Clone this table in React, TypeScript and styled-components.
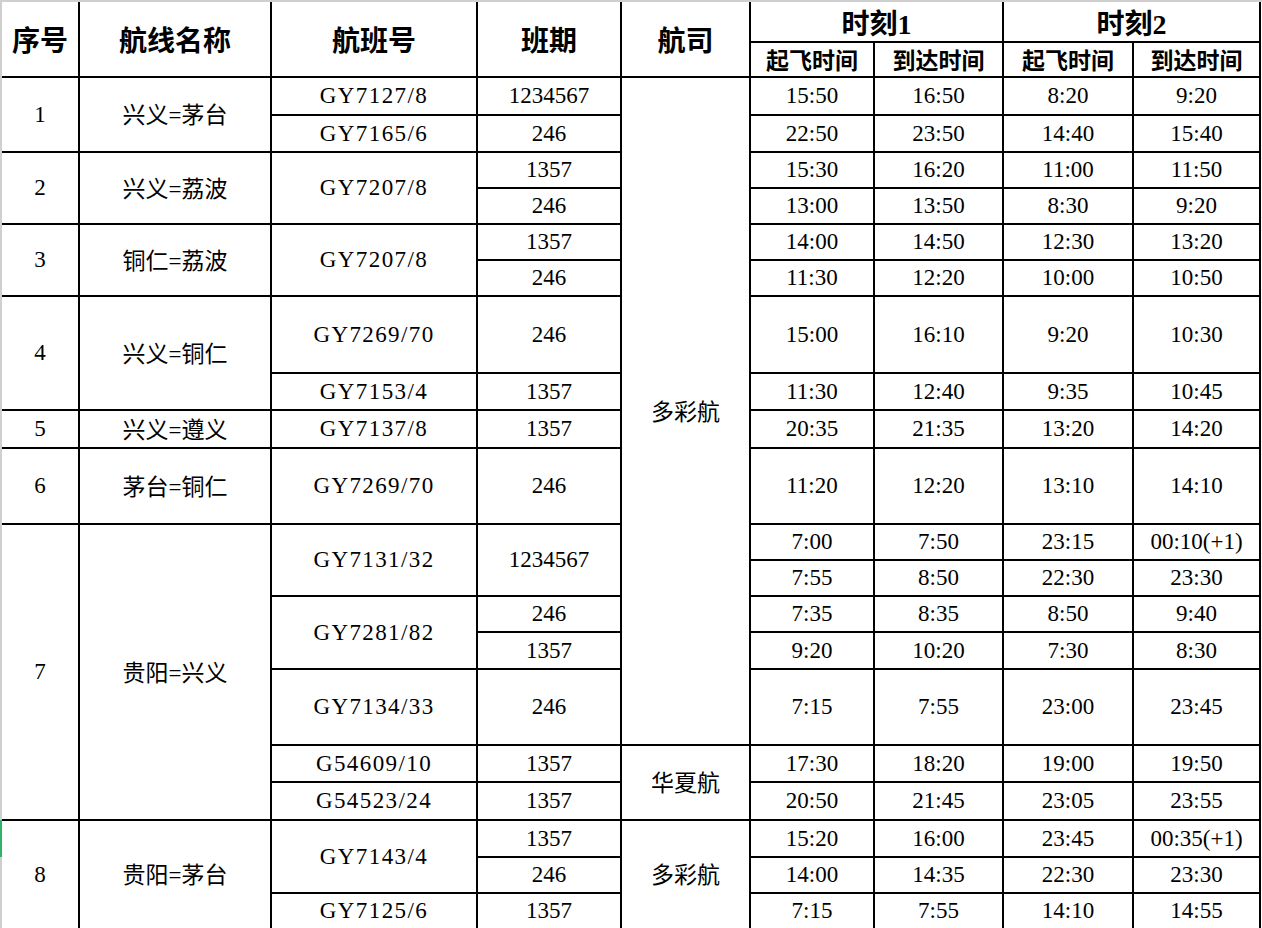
import React from "react";
import styled, { createGlobalStyle } from "styled-components";

const GlobalStyle = createGlobalStyle`
  html, body {
    margin: 0;
    padding: 0;
    background: #ffffff;
  }
  body {
    font-family: "Liberation Serif", "Noto Sans CJK SC", serif;
    color: #000000;
    overflow: hidden;
  }
`;

const Sheet = styled.div`
  display: flex;
  flex-direction: row;
  min-height: 928px;
`;

// sheet edge on the left, with the selected-row marker in green
const Gutter = styled.div`
  flex: 0 0 2px;
  background: linear-gradient(
    to bottom,
    #cfcfcf 0,
    #cfcfcf 820px,
    #31b26a 820px,
    #31b26a 857px,
    #cfcfcf 857px
  );
`;

const Main = styled.div`
  flex: 1;
  border-top: 2px solid #cfcfcf;
`;

const Table = styled.table`
  border-collapse: separate;
  border-spacing: 0;
  table-layout: fixed;
  width: 1259px;
`;

const Row = styled.tr<{ $h: number }>`
  height: ${(p) => p.$h}px;
`;

const Cell = styled.td`
  border-right: 2px solid #000;
  border-bottom: 2px solid #000;
  padding: 0;
  text-align: center;
  vertical-align: middle;
  white-space: nowrap;
  font-size: 23px;
  line-height: 1.2;
`;

// CJK glyphs sit a little high next to the serif digits
const Cn = styled(Cell)`
  padding-top: 3px;
`;

const Head = styled(Cell).attrs({ as: "th" })`
  font-size: 28px;
  font-weight: 700;
  line-height: 30px;
  padding-top: 6px;
`;

const SubHead = styled(Cell).attrs({ as: "th" })`
  font-size: 23px;
  font-weight: 700;
  line-height: 27px;
  padding-top: 4px;
`;

const Flight = styled(Cell)`
  letter-spacing: 1.4px;
`;

const widths = [78, 192, 206, 144, 129, 124, 129, 130, 127];

function Times({ t }: { t: string[] }) {
  return (
    <>
      {t.map((v, i) => (
        <Cell key={i}>{v}</Cell>
      ))}
    </>
  );
}

export default function App() {
  return (
    <React.Fragment>
      <GlobalStyle />
      <Sheet>
        <Gutter />
        <Main>
          <Table>
            <colgroup>
              {widths.map((w, i) => (
                <col key={i} width={w} />
              ))}
            </colgroup>
            <thead>
              <Row $h={41}>
                <Head rowSpan={2}>序号</Head>
                <Head rowSpan={2}>航线名称</Head>
                <Head rowSpan={2}>航班号</Head>
                <Head rowSpan={2}>班期</Head>
                <Head rowSpan={2}>航司</Head>
                <Head colSpan={2}>时刻1</Head>
                <Head colSpan={2}>时刻2</Head>
              </Row>
              <Row $h={35}>
                <SubHead>起飞时间</SubHead>
                <SubHead>到达时间</SubHead>
                <SubHead>起飞时间</SubHead>
                <SubHead>到达时间</SubHead>
              </Row>
            </thead>
            <tbody>
              <Row $h={38}>
                <Cell rowSpan={2}>1</Cell>
                <Cn rowSpan={2}>兴义=茅台</Cn>
                <Flight>GY7127/8</Flight>
                <Cell>1234567</Cell>
                <Cn rowSpan={15}>多彩航</Cn>
                <Times t={["15:50", "16:50", "8:20", "9:20"]} />
              </Row>
              <Row $h={37}>
                <Flight>GY7165/6</Flight>
                <Cell>246</Cell>
                <Times t={["22:50", "23:50", "14:40", "15:40"]} />
              </Row>

              <Row $h={36}>
                <Cell rowSpan={2}>2</Cell>
                <Cn rowSpan={2}>兴义=荔波</Cn>
                <Flight rowSpan={2}>GY7207/8</Flight>
                <Cell>1357</Cell>
                <Times t={["15:30", "16:20", "11:00", "11:50"]} />
              </Row>
              <Row $h={36}>
                <Cell>246</Cell>
                <Times t={["13:00", "13:50", "8:30", "9:20"]} />
              </Row>

              <Row $h={36}>
                <Cell rowSpan={2}>3</Cell>
                <Cn rowSpan={2}>铜仁=荔波</Cn>
                <Flight rowSpan={2}>GY7207/8</Flight>
                <Cell>1357</Cell>
                <Times t={["14:00", "14:50", "12:30", "13:20"]} />
              </Row>
              <Row $h={36}>
                <Cell>246</Cell>
                <Times t={["11:30", "12:20", "10:00", "10:50"]} />
              </Row>

              <Row $h={77}>
                <Cell rowSpan={2}>4</Cell>
                <Cn rowSpan={2}>兴义=铜仁</Cn>
                <Flight>GY7269/70</Flight>
                <Cell>246</Cell>
                <Times t={["15:00", "16:10", "9:20", "10:30"]} />
              </Row>
              <Row $h={37}>
                <Flight>GY7153/4</Flight>
                <Cell>1357</Cell>
                <Times t={["11:30", "12:40", "9:35", "10:45"]} />
              </Row>

              <Row $h={38}>
                <Cell>5</Cell>
                <Cn>兴义=遵义</Cn>
                <Flight>GY7137/8</Flight>
                <Cell>1357</Cell>
                <Times t={["20:35", "21:35", "13:20", "14:20"]} />
              </Row>

              <Row $h={76}>
                <Cell>6</Cell>
                <Cn>茅台=铜仁</Cn>
                <Flight>GY7269/70</Flight>
                <Cell>246</Cell>
                <Times t={["11:20", "12:20", "13:10", "14:10"]} />
              </Row>

              <Row $h={36}>
                <Cell rowSpan={7}>7</Cell>
                <Cn rowSpan={7}>贵阳=兴义</Cn>
                <Flight rowSpan={2}>GY7131/32</Flight>
                <Cell rowSpan={2}>1234567</Cell>
                <Times t={["7:00", "7:50", "23:15", "00:10(+1)"]} />
              </Row>
              <Row $h={36}>
                <Times t={["7:55", "8:50", "22:30", "23:30"]} />
              </Row>
              <Row $h={36}>
                <Flight rowSpan={2}>GY7281/82</Flight>
                <Cell>246</Cell>
                <Times t={["7:35", "8:35", "8:50", "9:40"]} />
              </Row>
              <Row $h={37}>
                <Cell>1357</Cell>
                <Times t={["9:20", "10:20", "7:30", "8:30"]} />
              </Row>
              <Row $h={76}>
                <Flight>GY7134/33</Flight>
                <Cell>246</Cell>
                <Times t={["7:15", "7:55", "23:00", "23:45"]} />
              </Row>
              <Row $h={37}>
                <Flight>G54609/10</Flight>
                <Cell>1357</Cell>
                <Cn rowSpan={2}>华夏航</Cn>
                <Times t={["17:30", "18:20", "19:00", "19:50"]} />
              </Row>
              <Row $h={38}>
                <Flight>G54523/24</Flight>
                <Cell>1357</Cell>
                <Times t={["20:50", "21:45", "23:05", "23:55"]} />
              </Row>

              <Row $h={37}>
                <Cell rowSpan={3}>8</Cell>
                <Cn rowSpan={3}>贵阳=茅台</Cn>
                <Flight rowSpan={2}>GY7143/4</Flight>
                <Cell>1357</Cell>
                <Cn rowSpan={3}>多彩航</Cn>
                <Times t={["15:20", "16:00", "23:45", "00:35(+1)"]} />
              </Row>
              <Row $h={36}>
                <Cell>246</Cell>
                <Times t={["14:00", "14:35", "22:30", "23:30"]} />
              </Row>
              <Row $h={36}>
                <Flight>GY7125/6</Flight>
                <Cell>1357</Cell>
                <Times t={["7:15", "7:55", "14:10", "14:55"]} />
              </Row>
            </tbody>
          </Table>
        </Main>
      </Sheet>
    </React.Fragment>
  );
}
